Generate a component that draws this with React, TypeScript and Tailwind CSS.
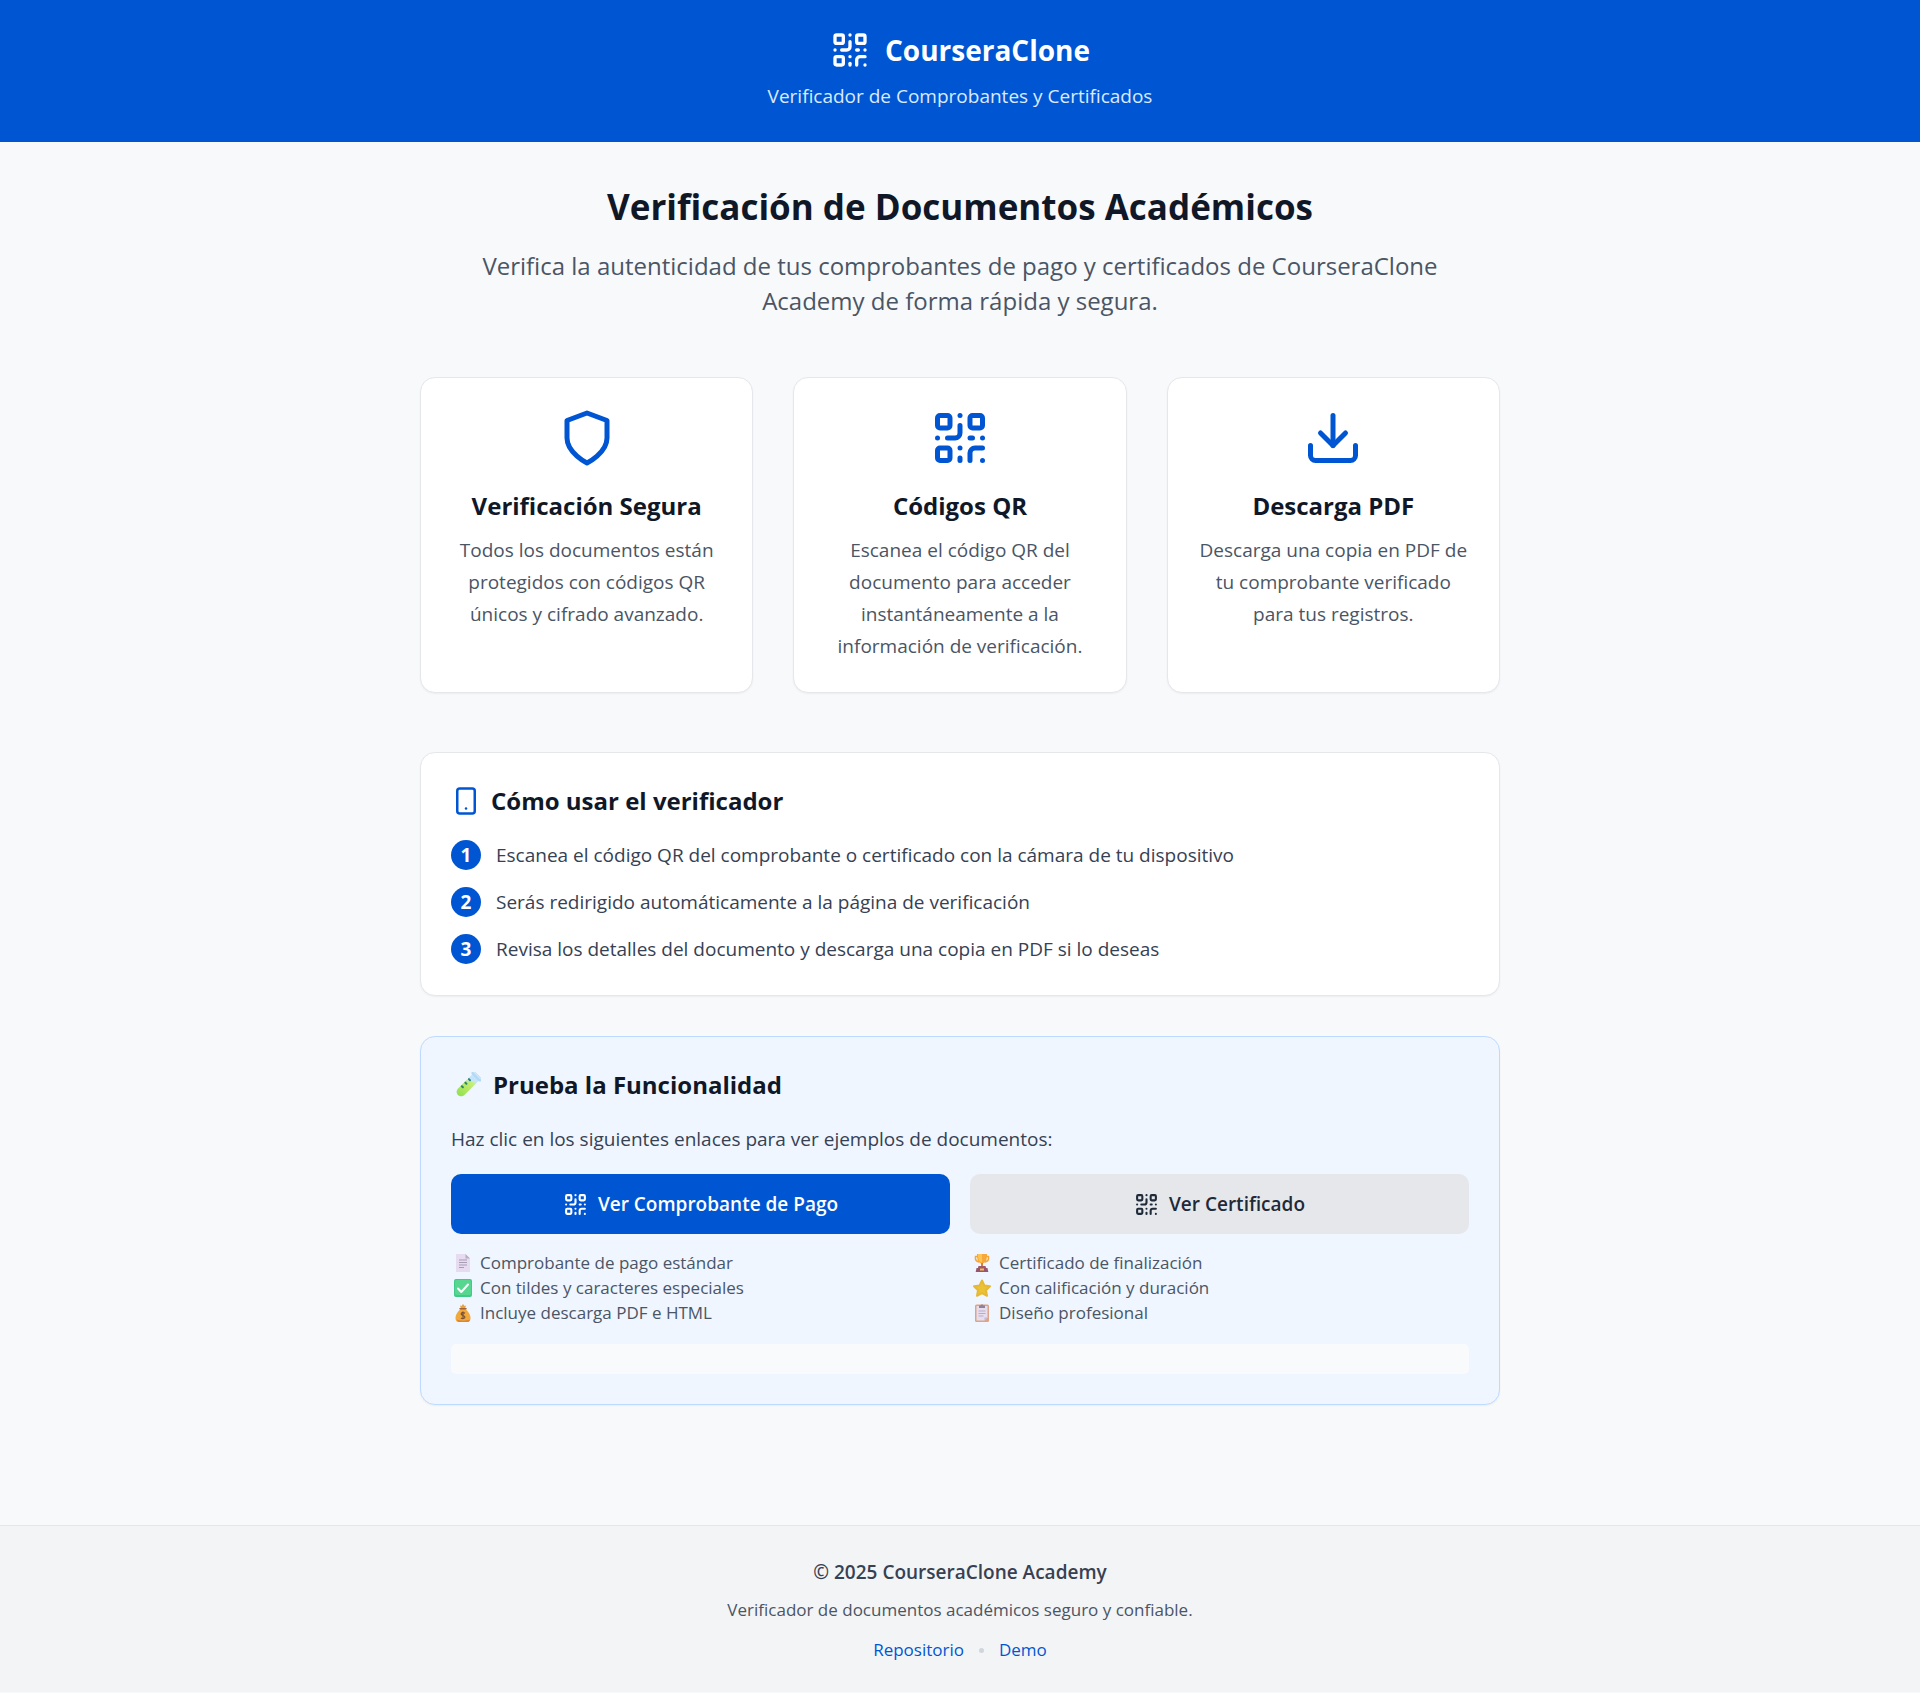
import type { ReactNode } from "react";
import { Download, QrCode, Smartphone } from "lucide-react";

function ShieldIcon() {
  return (
    <svg
      viewBox="0 0 24 24"
      className="size-[60px] text-[#0056d2]"
      fill="none"
      stroke="currentColor"
      strokeWidth="2"
      strokeLinecap="round"
      strokeLinejoin="round"
      aria-hidden="true"
    >
      <path d="M12 22s8-4 8-10V5l-8-3-8 3v7c0 6 8 10 8 10" />
    </svg>
  );
}

function TestTube() {
  return (
    <svg viewBox="0 0 26 26" className="ml-1 size-[26px] shrink-0" aria-hidden="true">
      <defs>
        <linearGradient id="tube" x1="0" y1="1" x2="0" y2="0">
          <stop offset="0" stopColor="#93e052" />
          <stop offset="0.6" stopColor="#b9ea62" />
          <stop offset="1" stopColor="#cdf08a" />
        </linearGradient>
      </defs>
      <g transform="translate(12.5 13.5) rotate(45)">
        <path d="M-4.500-12h9V9a4.500 4.500 0 0 1-9 0Z" fill="#c4e4fa" />
        <path d="M-4.500-3 4.500-8V9a4.500 4.500 0 0 1-9 0Z" fill="url(#tube)" />
        <rect x="-6.500" y="-15" width="13" height="4" rx="2" fill="#b3d9f7" />
        <path d="M-4.500-14h9" stroke="#d3ebfd" strokeWidth="1" strokeLinecap="round" />
        <path d="M-3.500-5.500h1.500M-3.500-.500h1.500M-3.500 4.500h1.500" stroke="#2f8270" strokeWidth="2" strokeLinecap="round" />
      </g>
    </svg>
  );
}

function PageEmoji() {
  return (
    <>
      <path d="M2 0h9.500L16 4.500V18H2Z" fill="#e6dbf0" />
      <path d="M11.500 0 16 4.500h-4.500Z" fill="#b9adc4" />
      <path d="M5 6h8M5 8.500h8M5 11h8M5 13.500h5" stroke="#a79db2" strokeWidth="1" />
    </>
  );
}

function CheckEmoji() {
  return (
    <>
      <rect width="18" height="18" rx="2" fill="#41c98a" />
      <rect x="1" y="1" width="16" height="15" rx="1.500" fill="#56d68f" />
      <path d="m4 9.500 3.300 3.500L14 5.500" fill="none" stroke="#fff" strokeWidth="2" strokeLinecap="round" strokeLinejoin="round" />
    </>
  );
}

function MoneyEmoji() {
  return (
    <>
      <path d="M6 1.500 7.500 2 9 0l1.500 2 1.500-.5-1 3.500H7Z" fill="#e8a13c" />
      <path d="M7 5h4c3 2 5.500 5.500 5.500 9 0 3-1.500 4-3.500 4H5c-2 0-3.500-1-3.500-4C1.500 10.500 4 7 7 5Z" fill="#f2a93b" />
      <path d="M3 15.500c3 1.500 9 1.500 13 0-.5 2-1.500 2.500-3 2.500H5c-1 0-1.800-.8-2-2.500Z" fill="#dc8432" />
      <path d="M6 4.800h6" stroke="#a0643c" strokeWidth="1.500" strokeLinecap="round" />
      <path d="M11 9.300C9 8 7 8.700 7.200 10.200c.2 1.500 3.600 1.200 3.700 2.900.1 1.500-2.300 2-4 .8M9 7.500v7.800" fill="none" stroke="#77503b" strokeWidth="1.200" />
    </>
  );
}

function TrophyEmoji() {
  return (
    <>
      <path d="M5 2.500H2.500c-.5 3 .8 5 3.500 5.500M13 2.500h2.500c.5 3-.8 5-3.500 5.500" fill="none" stroke="#f0a63d" strokeWidth="1.500" />
      <path d="M4 0h10c0 5-.5 9-5 9.500C4.500 9 4 5 4 0Z" fill="#f7a838" />
      <path d="M5 0h4v8.500C6 7.500 5 5 5 0Z" fill="#fbc553" />
      <path d="M8 9h2v4H8Z" fill="#d98234" />
      <path d="M5.500 12h7l.8 2.500H4.700Z" fill="#a35a68" />
      <path d="M3.500 14h11l.8 4H2.700Z" fill="#95566e" />
      <rect x="7" y="14.500" width="4" height="2" fill="#f4bd4f" />
    </>
  );
}

function StarEmoji() {
  return (
    <path
      d="m9 1.500 2.400 5 5.600.8-4 4 1 5.500-5-2.600-5 2.600 1-5.500-4-4 5.600-.8Z"
      fill="#ebc136"
      stroke="#e6b935"
      strokeWidth="2"
      strokeLinejoin="round"
    />
  );
}

function ClipboardEmoji() {
  return (
    <>
      <rect x="2" y="0.500" width="14" height="17.500" rx="1.500" fill="#dda486" />
      <path d="M3.500 2h11v11.500l-3 3h-8Z" fill="#e6def0" />
      <path d="m11.500 16.500 3-3h-3Z" fill="#c3b8d2" />
      <path d="M6 1.500h1.500C7.700 0 10.300 0 10.500 1.500H12V4H6Z" fill="#8d8496" />
      <path d="M5.500 7h7M5.500 9.500h7M5.500 12h5" stroke="#b7adc4" strokeWidth="1" />
    </>
  );
}

function Feature({ icon, title, children }: { icon: ReactNode; title: string; children: string }) {
  return (
    <article className="flex flex-col items-center rounded-[15px] border border-gray-200 bg-white p-[30px] text-center shadow-xs">
      {icon}
      <h3 className="mt-5 text-[24px] leading-9 font-bold text-gray-900">{title}</h3>
      <p className="mt-[10px] text-[19px] leading-8 text-gray-600">{children}</p>
    </article>
  );
}

function Notes({ items }: { items: { art: ReactNode; text: string }[] }) {
  return (
    <ul className="mt-4 text-[17px] leading-[25px] text-gray-600">
      {items.map((item) => (
        <li key={item.text} className="flex items-center gap-2">
          <svg viewBox="0 0 18 18" className="ml-[3px] size-[18px] shrink-0" aria-hidden="true">
            {item.art}
          </svg>
          {item.text}
        </li>
      ))}
    </ul>
  );
}

const steps = [
  "Escanea el código QR del comprobante o certificado con la cámara de tu dispositivo",
  "Serás redirigido automáticamente a la página de verificación",
  "Revisa los detalles del documento y descarga una copia en PDF si lo deseas",
];

export default function App() {
  return (
    <div className="min-h-screen bg-[#f8f9fb] font-['Open_Sans','Noto_Sans',sans-serif] text-[19px] leading-8">
      <header className="bg-[#0056d2] p-[30px] text-center text-white">
        <div className="flex items-center justify-center gap-[15px]">
          <QrCode className="size-10" />
          <h1 className="text-[28px] leading-10 font-bold">CourseraClone</h1>
        </div>
        <p className="mt-[10px] text-blue-100">Verificador de Comprobantes y Certificados</p>
      </header>

      <main className="mx-auto max-w-[1120px] px-5 pt-10 pb-[120px]">
        <section className="mx-auto max-w-[960px] text-center">
          <h2 className="text-[35px] leading-[50px] font-bold text-gray-900">Verificación de Documentos Académicos</h2>
          <p className="mt-4 text-[24px] leading-[35px] text-gray-600">
            Verifica la autenticidad de tus comprobantes de pago y certificados de CourseraClone Academy de forma rápida
            y segura.
          </p>
        </section>

        <section className="mt-[59px] grid grid-cols-1 gap-10 md:grid-cols-3">
          <Feature icon={<ShieldIcon />} title="Verificación Segura">
            Todos los documentos están protegidos con códigos QR únicos y cifrado avanzado.
          </Feature>
          <Feature icon={<QrCode className="size-[60px] text-[#0056d2]" />} title="Códigos QR">
            Escanea el código QR del documento para acceder instantáneamente a la información de verificación.
          </Feature>
          <Feature icon={<Download className="size-[60px] text-[#0056d2]" />} title="Descarga PDF">
            Descarga una copia en PDF de tu comprobante verificado para tus registros.
          </Feature>
        </section>

        <section className="mt-[59px] rounded-[15px] border border-gray-200 bg-white p-[30px] shadow-xs">
          <h3 className="flex items-center gap-[10px] text-[24px] leading-9 font-bold text-gray-900">
            <Smartphone className="size-[30px] text-[#0056d2]" />
            Cómo usar el verificador
          </h3>
          <ol className="mt-5 flex flex-col gap-[15px] text-gray-700">
            {steps.map((step, i) => (
              <li key={step} className="flex items-center gap-[15px]">
                <span className="flex size-[30px] shrink-0 items-center justify-center rounded-full bg-[#0056d2] font-bold text-white">
                  {i + 1}
                </span>
                {step}
              </li>
            ))}
          </ol>
        </section>

        <section className="mt-10 rounded-[15px] border border-blue-200 bg-blue-50 p-[30px] shadow-xs">
          <h3 className="flex items-center gap-3 text-[24px] leading-9 font-bold text-gray-900">
            <TestTube />
            Prueba la Funcionalidad
          </h3>
          <p className="mt-5 text-gray-700">Haz clic en los siguientes enlaces para ver ejemplos de documentos:</p>
          <div className="mt-[19px] grid grid-cols-1 gap-5 md:grid-cols-2">
            <div>
              <a
                href="#comprobante"
                className="flex h-[60px] items-center justify-center gap-[10px] rounded-[10px] bg-[#0056d2] font-semibold text-white"
              >
                <QrCode className="size-[25px]" />
                Ver Comprobante de Pago
              </a>
              <Notes
                items={[
                  { art: <PageEmoji />, text: "Comprobante de pago estándar" },
                  { art: <CheckEmoji />, text: "Con tildes y caracteres especiales" },
                  { art: <MoneyEmoji />, text: "Incluye descarga PDF e HTML" },
                ]}
              />
            </div>
            <div>
              <a
                href="#certificado"
                className="flex h-[60px] items-center justify-center gap-[10px] rounded-[10px] bg-gray-200 font-semibold text-gray-800"
              >
                <QrCode className="size-[25px]" />
                Ver Certificado
              </a>
              <Notes
                items={[
                  { art: <TrophyEmoji />, text: "Certificado de finalización" },
                  { art: <StarEmoji />, text: "Con calificación y duración" },
                  { art: <ClipboardEmoji />, text: "Diseño profesional" },
                ]}
              />
            </div>
          </div>
          <div className="mt-[19px] h-[30px] rounded-[5px] bg-gray-50" />
        </section>
      </main>

      <footer className="border-t border-gray-200 bg-gray-100 px-5 pt-[30px] pb-7 text-center text-[17px] leading-7 text-gray-600">
        <p className="text-[19px] leading-8 font-semibold text-gray-700">© 2025 CourseraClone Academy</p>
        <p className="mt-2">Verificador de documentos académicos seguro y confiable.</p>
        <nav className="mt-3 flex items-center justify-center gap-[15px]">
          <a href="#repositorio" className="text-[#0056d2]">
            Repositorio
          </a>
          <span className="size-[5px] rounded-full bg-gray-300" />
          <a href="#demo" className="text-[#0056d2]">
            Demo
          </a>
        </nav>
      </footer>
    </div>
  );
}
